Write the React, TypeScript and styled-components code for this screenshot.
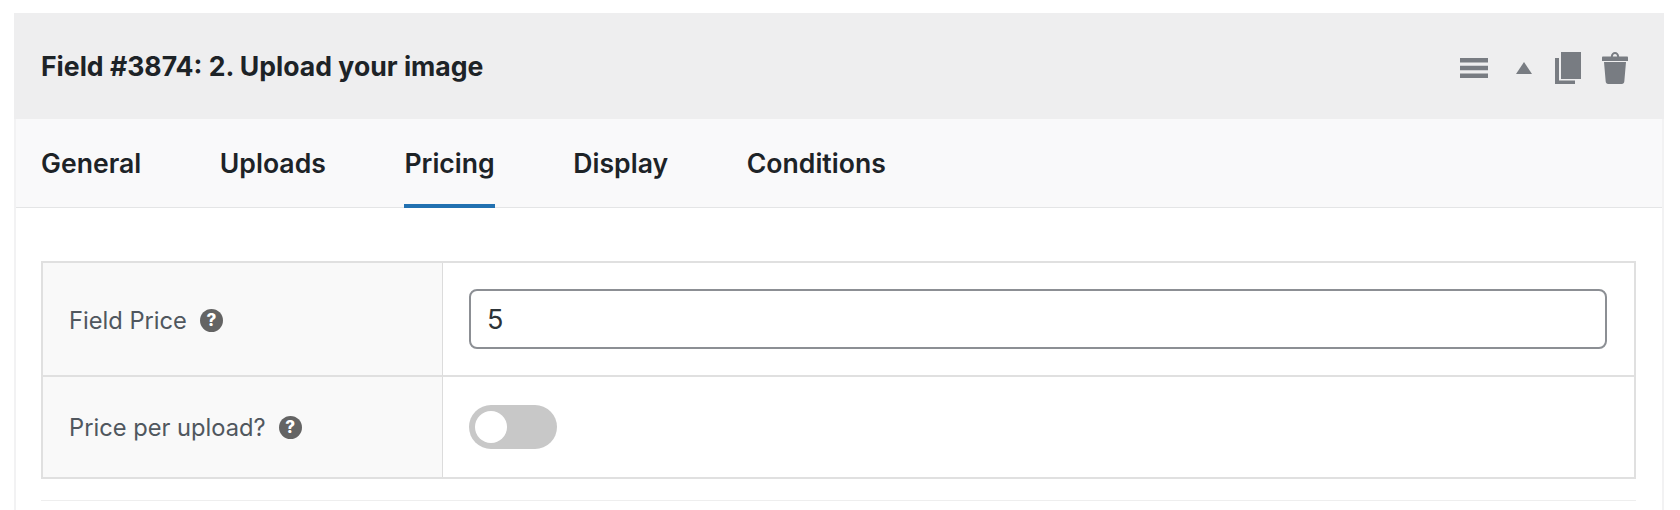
import styled, { createGlobalStyle } from "styled-components";

const GlobalStyle = createGlobalStyle`
  html, body {
    margin: 0;
    padding: 0;
    background: #ffffff;
    font-family: "Inter", "Liberation Sans", sans-serif;
  }
`;

const Page = styled.div`
  width: 1680px;
  height: 510px;
  padding: 13px 16px 0 14px;
  box-sizing: border-box;
  overflow: hidden;
`;

const Panel = styled.div`
  border-right: 2px solid #f2f2f3;
  border-left: 2px solid #f2f2f3;
  height: 497px;
  box-sizing: border-box;
`;

const Header = styled.div`
  display: flex;
  align-items: center;
  justify-content: space-between;
  height: 106px;
  margin: 0 -2px;
  padding: 0 36px 0 27px;
  background: #eeeeef;
`;

const Title = styled.h3`
  margin: 0;
  font-size: 26.6px;
  font-weight: 650;
  letter-spacing: 0;
  color: #1d2327;
`;

const Actions = styled.div`
  display: flex;
  align-items: center;
  margin-top: 4px;
  color: #787c82;
`;

const ActionIcon = styled.svg<{ $gap: number }>`
  display: block;
  margin-left: ${({ $gap }) => $gap}px;
  fill: currentColor;
`;

const TabBar = styled.div`
  display: flex;
  gap: 78.6px;
  height: 88px;
  padding-left: 25px;
  background: #f9f9fa;
  border-bottom: 1px solid #e4e5e6;
`;

const Tab = styled.div<{ $active?: boolean }>`
  display: flex;
  align-items: center;
  height: ${({ $active }) => ($active ? "89px" : "88px")};
  box-sizing: border-box;
  padding-top: ${({ $active }) => ($active ? "3px" : "0")};
  font-size: 26.6px;
  font-weight: 600;
  color: #1d2327;
  border-bottom: ${({ $active }) => ($active ? "4px solid #2271b1" : "none")};
`;

const Body = styled.div`
  padding: 53px 26px 0 25px;
`;

const SettingsTable = styled.div`
  display: grid;
  grid-template-columns: 399.5px 1fr;
  grid-template-rows: 114px 100px;
  border: 2px solid #e0e0e0;
  box-sizing: border-box;
  height: 218px;
`;

const LabelCell = styled.div<{ $last?: boolean }>`
  display: flex;
  align-items: center;
  gap: 13px;
  padding: ${({ $last }) => ($last ? "0" : "2px")} 0 0 26px;
  background: #f9f9f9;
  border-right: 1px solid #dcdcdc;
  border-bottom: ${({ $last }) => ($last ? "none" : "2px solid #e0e0e0")};
  font-size: 23.7px;
  color: #50575e;
`;

const ValueCell = styled.div<{ $last?: boolean }>`
  display: flex;
  align-items: center;
  padding: 0 27px 0 26.5px;
  border-bottom: ${({ $last }) => ($last ? "none" : "2px solid #e0e0e0")};
`;

const HelpBadge = styled.span`
  display: inline-flex;
  align-items: center;
  justify-content: center;
  width: 23px;
  height: 23px;
  border-radius: 50%;
  background: #646464;
  color: #ffffff;
  font-size: 17px;
  font-weight: 800;
`;

const PriceInput = styled.input`
  width: 100%;
  height: 60px;
  box-sizing: border-box;
  padding: 0 16px;
  border: 2px solid #8c8f94;
  border-radius: 8px;
  background: #ffffff;
  color: #2c3338;
  font-family: inherit;
  font-size: 27px;
`;

const Toggle = styled.span`
  display: flex;
  align-items: center;
  width: 88px;
  height: 44px;
  padding-left: 6px;
  box-sizing: border-box;
  border-radius: 22px;
  background: #c8c8c8;
`;

const ToggleKnob = styled.span`
  width: 32px;
  height: 32px;
  border-radius: 50%;
  background: #ffffff;
`;

const Rule = styled.hr`
  margin: 21px 0 0;
  border: 0;
  border-top: 1px solid #eeeeee;
`;

const tabs = ["General", "Uploads", "Pricing", "Display", "Conditions"];

export default function App() {
  return (
    <>
      <GlobalStyle />
      <Page>
        <Panel>
          <Header>
            <Title>Field #3874: 2. Upload your image</Title>
            <Actions>
              <ActionIcon $gap={0} width="28" height="20" viewBox="0 0 28 20">
                <path d="M0 0h28v4.500H0zM0 7.800h28v4.500H0zM0 15.500h28V20H0z" />
              </ActionIcon>
              <ActionIcon $gap={28} width="16" height="12" viewBox="0 0 16 12">
                <path d="M8 0L16 12H0z" />
              </ActionIcon>
              <ActionIcon $gap={23} width="26" height="32" viewBox="0 0 26 32">
                <path d="M6 0h20v27H6zM0 6h4v22.500h16V32H0z" />
              </ActionIcon>
              <ActionIcon $gap={21} width="26" height="32" viewBox="0 0 26 32">
                <path d="M1 4.500h7.800C9.200 1.500 10.800 0 13 0s3.800 1.500 4.200 4.500H25c.6 0 1 .5 1 1.200V9H0V5.700c0-.7.4-1.200 1-1.200zM10.800 4.500h4.400C14.900 2.800 14.200 2 13 2s-1.900.8-2.200 2.500zM2 10h22l-1.700 19.500c-.1 1.500-1 2.500-2.500 2.500H6.200c-1.500 0-2.400-1-2.500-2.500z" />
              </ActionIcon>
            </Actions>
          </Header>
          <TabBar>
            {tabs.map((t) => (
              <Tab key={t} $active={t === "Pricing"}>
                {t}
              </Tab>
            ))}
          </TabBar>
          <Body>
            <SettingsTable>
              <LabelCell>
                Field Price <HelpBadge>?</HelpBadge>
              </LabelCell>
              <ValueCell>
                <PriceInput defaultValue="5" />
              </ValueCell>
              <LabelCell $last>
                Price per upload? <HelpBadge>?</HelpBadge>
              </LabelCell>
              <ValueCell $last>
                <Toggle>
                  <ToggleKnob />
                </Toggle>
              </ValueCell>
            </SettingsTable>
            <Rule />
          </Body>
        </Panel>
      </Page>
    </>
  );
}
